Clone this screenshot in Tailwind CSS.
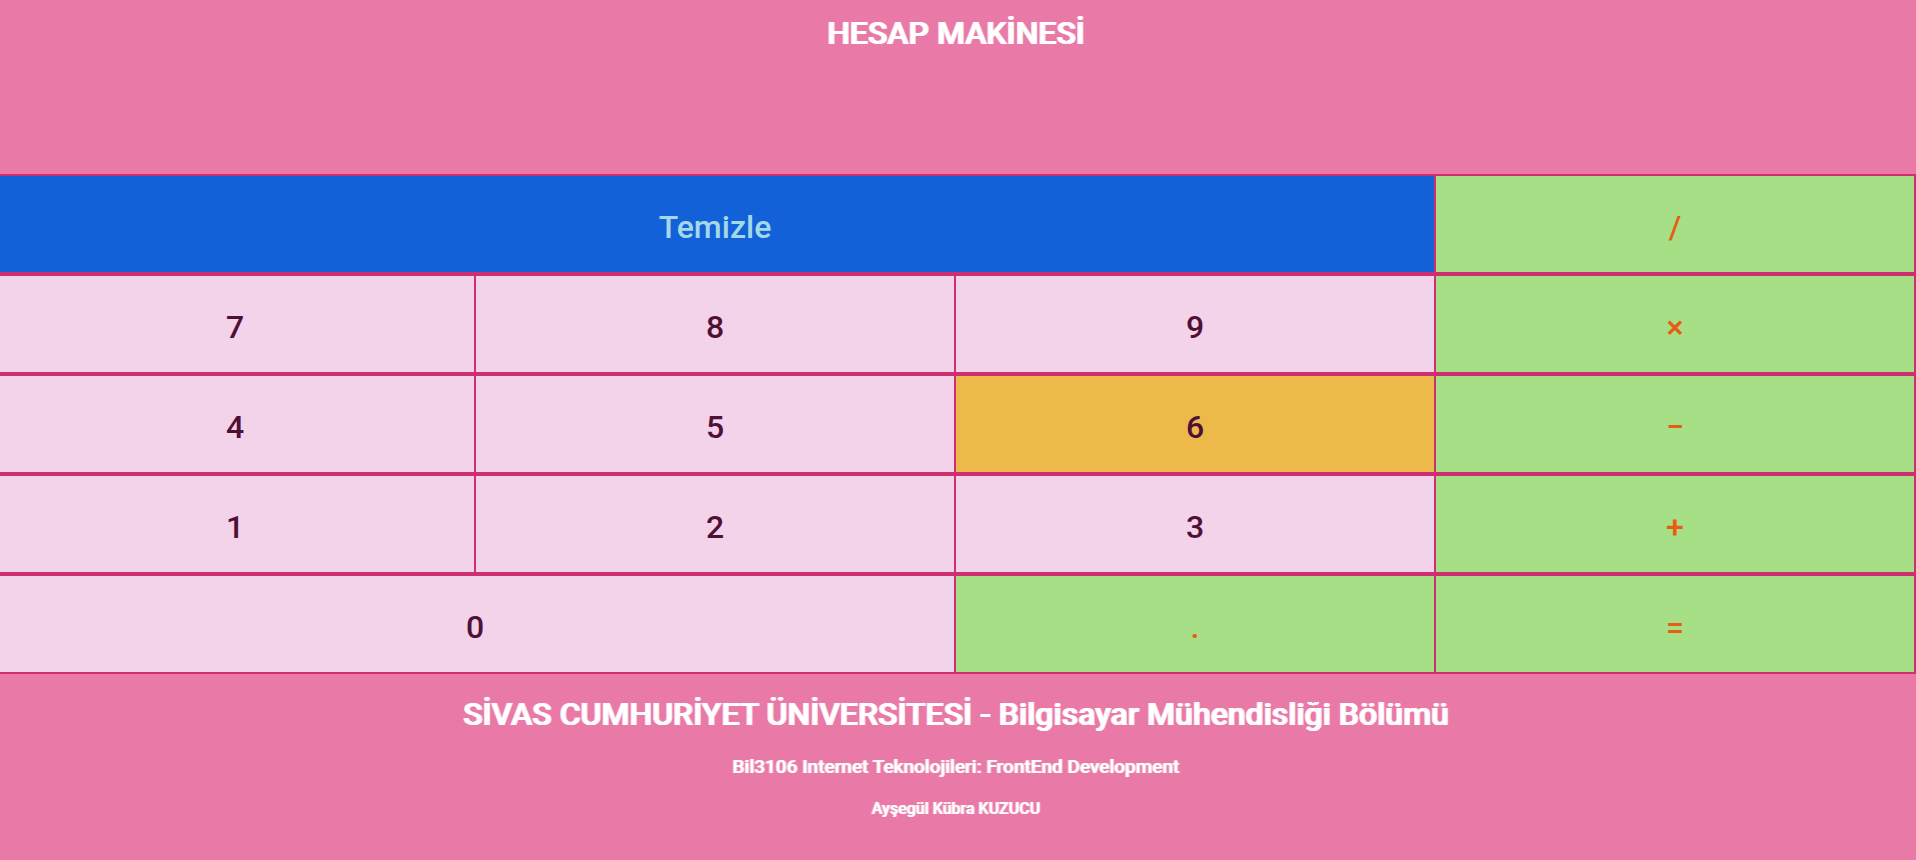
<!DOCTYPE html>
<html lang="tr">
<head>
<meta charset="utf-8">
<meta name="viewport" content="width=device-width, initial-scale=1">
<title>Hesap Makinesi</title>
<script src="https://cdn.jsdelivr.net/npm/@tailwindcss/browser@4"></script>
</head>
<body class="min-h-screen overflow-x-hidden bg-[#e97aa8] font-[Roboto,sans-serif] font-medium">
<div class="-ml-1">
  <header class="pt-[13px] pb-[121px] text-center">
    <h1 class="text-[32px] leading-10 text-white [text-shadow:1px_0_#fffc,-1px_0_#fffc] font-medium">HESAP MAKİNESİ</h1>
  </header>
  <main class="grid grid-cols-4 auto-rows-[100px] text-[32px] leading-10 text-[#4f1036] *:border-y-2 *:border-r-2 *:border-[#cf2e70] *:pt-1.5">
    <button type="button" class="col-span-3 bg-[#1261d9] text-[#a3d9e6]">Temizle</button>
    <button type="button" class="bg-[#a7df86] text-[#e65d14]">/</button>
    <button type="button" class="bg-[#f2d3e9]">7</button>
    <button type="button" class="bg-[#f2d3e9]">8</button>
    <button type="button" class="bg-[#f2d3e9]">9</button>
    <button type="button" class="bg-[#a7df86] text-[#e65d14]">×</button>
    <button type="button" class="bg-[#f2d3e9]">4</button>
    <button type="button" class="bg-[#f2d3e9]">5</button>
    <button type="button" class="bg-[#eeb94b]">6</button>
    <button type="button" class="bg-[#a7df86] text-[#e65d14]">−</button>
    <button type="button" class="bg-[#f2d3e9]">1</button>
    <button type="button" class="bg-[#f2d3e9]">2</button>
    <button type="button" class="bg-[#f2d3e9]">3</button>
    <button type="button" class="bg-[#a7df86] text-[#e65d14]">+</button>
    <button type="button" class="col-span-2 bg-[#f2d3e9]">0</button>
    <button type="button" class="bg-[#a7df86] text-[#e65d14]">.</button>
    <button type="button" class="bg-[#a7df86] text-[#e65d14]">=</button>
  </main>
  <footer class="flex flex-col items-center pt-5 text-center text-white">
    <h2 class="text-[32px] leading-10 font-medium [text-shadow:1px_0_#fffc,-1px_0_#fffc]">SİVAS CUMHURİYET ÜNİVERSİTESİ - Bilgisayar Mühendisliği Bölümü</h2>
    <h3 class="mt-[21px] text-[19px] leading-6 font-medium [text-shadow:1px_0_#fff8,-1px_0_#fff8]">Bil3106 Internet Teknolojileri: FrontEnd Development</h3>
    <h4 class="mt-5 text-base leading-5 font-medium [text-shadow:1px_0_#fff8,-1px_0_#fff8]">Ayşegül Kübra KUZUCU</h4>
  </footer>
</div>
</body>
</html>
